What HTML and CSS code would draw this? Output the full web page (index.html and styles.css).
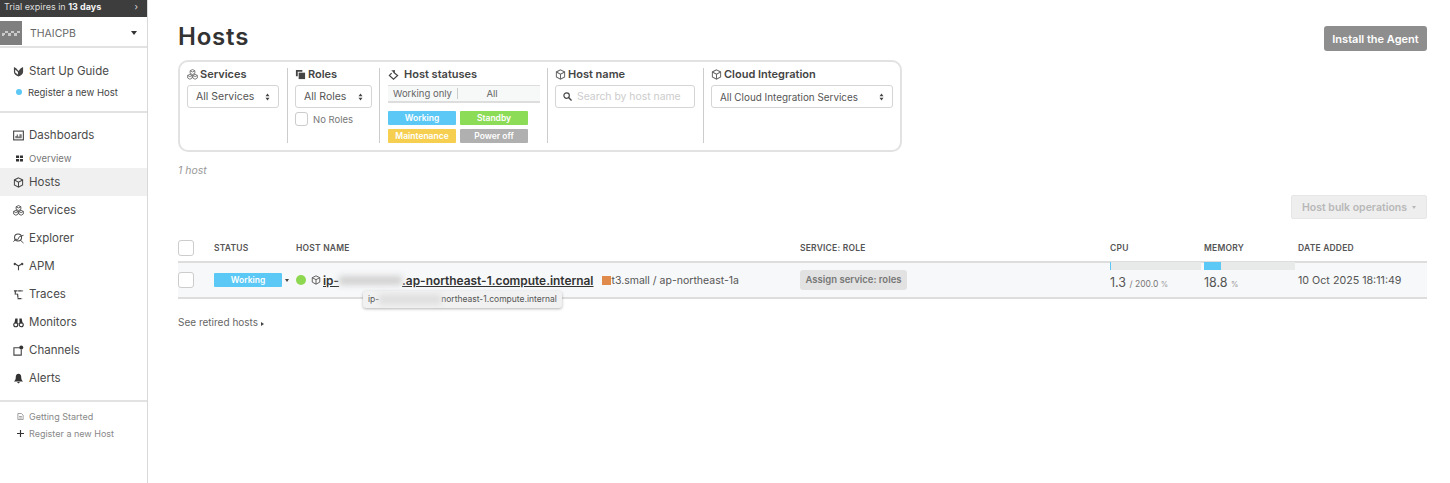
FILE: index.html
```html
<!DOCTYPE html>
<html lang="en">
<head>
    <meta charset="UTF-8">
    <meta name="viewport" content="width=device-width, initial-scale=1.0">
    <title>Hosts</title>
    <link rel="stylesheet" href="styles.css">
</head>
<body>
    <!-- Shared icons -->
    <svg class="icon-defs" aria-hidden="true">
        <symbol id="i-cube" viewBox="0 0 12 12">
            <path d="M6 1 10.5 3.2V8.6L6 11 1.500 8.600V3.200Z M1.500 3.200 6 5.600 10.500 3.200 M6 5.600V11" fill="none" stroke="currentColor" stroke-width="1.100"/>
        </symbol>
        <symbol id="i-services" viewBox="0 0 12 12">
            <path d="M6 .6 8.600 1.900V4.700L6 6 3.400 4.700V1.900Z M3.200 5.800 5.700 7V9.800L3.200 11.200 .7 9.800V7Z M8.800 5.800 11.300 7V9.800L8.800 11.200 6.300 9.800V7Z M3.400 1.900 6 3.200 8.600 1.900M.7 7 3.200 8.300 5.700 7M6.300 7 8.800 8.300 11.300 7" fill="none" stroke="currentColor" stroke-width=".9"/>
        </symbol>
        <symbol id="i-updown" viewBox="0 0 6 10">
            <path d="M3 .5 5.500 4H.5Z M3 9.500 .5 6H5.500Z" fill="currentColor"/>
        </symbol>
    </svg>

    <div class="layout">
        <!-- Sidebar -->
        <nav class="sidebar">
            <div class="trial"><span>Trial expires in <b>13 days</b></span><span class="trial-arrow">›</span></div>
            <div class="org">
                <span class="org-logo">
                    <svg width="22" height="24" viewBox="0 0 22 24"><path d="M2 12h3v2H2zM5 10h3v2H5zM8 12h3v2H8zM11 10h3v2h-3zM14 12h3v2h-3zM17 10h3v2h-3zM2 14h2v1H2zM8 14h3v1H8zM14 14h3v1h-3z" fill="#c9c9c9"/></svg>
                </span>
                <span class="org-name">THAICPB</span>
                <span class="org-caret"></span>
            </div>

            <div class="nav-section guide">
                <div class="nav-item">
                    <svg class="nav-icon" viewBox="0 0 12 12"><path d="M1 1 3.500 2.500 6 5.500 8.500 2.500 11 1V6.500C11 9 8.500 10.500 6 11.500 3.500 10.500 1 9 1 6.500Z" fill="#444"/><path d="M2.400 3.800V7.200L5.400 9.500V6.500Z" fill="#fff"/></svg>
                    Start Up Guide
                </div>
                <div class="nav-sub guide-sub"><span class="blue-dot"></span>Register a new Host</div>
            </div>

            <div class="nav-section">
                <div class="nav-item">
                    <svg class="nav-icon" viewBox="0 0 12 12"><rect x=".7" y="1.200" width="10.600" height="9.600" fill="none" stroke="#444" stroke-width="1.200"/><path d="M2.500 9V6.500H4V5H5.500V7H7V4.500H9.500V9Z" fill="#777"/></svg>
                    Dashboards
                </div>
                <div class="nav-sub">
                    <svg class="sub-icon" viewBox="0 0 8 8"><path d="M0 .5h3.500v3H0zM4.500 .5H8v3H4.500zM0 4.500h3.500v3H0zM4.500 4.500H8v3H4.500z" fill="#333"/></svg>
                    Overview
                </div>
                <div class="nav-item active"><svg class="nav-icon"><use href="#i-cube"/></svg>Hosts</div>
                <div class="nav-item"><svg class="nav-icon"><use href="#i-services"/></svg>Services</div>
                <div class="nav-item">
                    <svg class="nav-icon" viewBox="0 0 12 12"><circle cx="5.500" cy="5" r="3.800" fill="none" stroke="#444" stroke-width="1.100"/><path d="M8 7.800 11.500 11M.5 9.500 3 6.500 5 7.500 7 4 11.500 2.500" fill="none" stroke="#444" stroke-width="1"/></svg>
                    Explorer
                </div>
                <div class="nav-item">
                    <svg class="nav-icon" viewBox="0 0 12 12"><path d="M6 10V5.500M6 5.500 3 3.500M6 5.500 9 3.500" fill="none" stroke="#444" stroke-width="1.200"/><circle cx="2" cy="3.200" r="1.300" fill="#444"/><circle cx="10" cy="3.200" r="1.300" fill="#444"/></svg>
                    APM
                </div>
                <div class="nav-item">
                    <svg class="nav-icon" viewBox="0 0 12 12"><path d="M1 2H11M2.500 2V5.500H5M5 5.500 5.500 10.500H10" fill="none" stroke="#444" stroke-width="1.300" stroke-dasharray="4 .6"/></svg>
                    Traces
                </div>
                <div class="nav-item">
                    <svg class="nav-icon" viewBox="0 0 12 12"><circle cx="3" cy="8.500" r="2.200" fill="none" stroke="#333" stroke-width="1.200"/><circle cx="9" cy="8.500" r="2.200" fill="none" stroke="#333" stroke-width="1.200"/><path d="M1.500 7 2.500 1.500H5V7.500H7V1.500H9.500L10.500 7Z" fill="#333"/></svg>
                    Monitors
                </div>
                <div class="nav-item">
                    <svg class="nav-icon" viewBox="0 0 12 12"><path d="M7 3H1V11H9V5" fill="none" stroke="#444" stroke-width="1.200"/><circle cx="9" cy="2.700" r="2.200" fill="#333"/></svg>
                    Channels
                </div>
                <div class="nav-item">
                    <svg class="nav-icon" viewBox="0 0 12 12"><path d="M6 .8C4 .8 3 2.500 3 4.500 3 6.800 2.300 7.800 1 9.200H11C9.700 7.800 9 6.800 9 4.500 9 2.500 8 .8 6 .8ZM4.700 9.800H7.300C7.200 10.700 6.700 11.300 6 11.300S4.800 10.700 4.700 9.800Z" fill="#333"/></svg>
                    Alerts
                </div>
            </div>

            <div class="nav-foot">
                <div class="foot-item">
                    <svg class="sub-icon" viewBox="0 0 8 8"><path d="M1 .5H5L7 2.500V7.500H1Z M2.500 4H5.500M2.500 5.700H5.500" fill="none" stroke="#777" stroke-width=".8"/></svg>
                    Getting Started
                </div>
                <div class="foot-item">
                    <svg class="sub-icon" viewBox="0 0 8 8"><path d="M4 0V8M0 4H8" stroke="#333" stroke-width="1.300"/></svg>
                    Register a new Host
                </div>
            </div>
        </nav>

        <!-- Main content -->
        <main class="main">
            <header class="page-head">
                <h1>Hosts</h1>
                <button class="btn-agent">Install the Agent</button>
            </header>

            <!-- Filters -->
            <section class="filters">
                <div class="filter filter-services">
                    <div class="filter-title"><svg class="title-icon"><use href="#i-services"/></svg>Services</div>
                    <div class="select">All Services<svg class="updown"><use href="#i-updown"/></svg></div>
                </div>
                <div class="filter filter-roles">
                    <div class="filter-title">
                        <svg class="title-icon" viewBox="0 0 12 12"><path d="M1 1H8V3H3V8H1Z" fill="#444"/><rect x="4" y="4" width="7" height="7" fill="#444"/></svg>
                        Roles
                    </div>
                    <div class="select">All Roles<svg class="updown"><use href="#i-updown"/></svg></div>
                    <label class="no-roles"><span class="checkbox small"></span>No Roles</label>
                </div>
                <div class="filter filter-status">
                    <div class="filter-title">
                        <svg class="title-icon status-icon" viewBox="0 0 12 12"><path d="M6 3.500 10.500 7 6 11 1.500 7 4 4.500" fill="none" stroke="#444" stroke-width="1.300"/><path d="M3.500 1.500 7.500 1V4.500Z" fill="#444"/></svg>
                        Host statuses
                    </div>
                    <div class="status-tabs">
                        <span class="tab tab-working">Working only</span>
                        <span class="tab tab-all">All</span>
                    </div>
                    <div class="status-grid">
                        <span class="status-label working">Working</span>
                        <span class="status-label standby">Standby</span>
                        <span class="status-label maintenance">Maintenance</span>
                        <span class="status-label poweroff">Power off</span>
                    </div>
                </div>
                <div class="filter filter-name">
                    <div class="filter-title"><svg class="title-icon"><use href="#i-cube"/></svg>Host name</div>
                    <div class="search">
                        <svg class="search-icon" viewBox="0 0 10 10"><circle cx="4" cy="4" r="3" fill="none" stroke="#444" stroke-width="1.300"/><path d="M6.200 6.200 9.500 9.500" stroke="#444" stroke-width="1.500"/></svg>
                        Search by host name
                    </div>
                </div>
                <div class="filter filter-cloud">
                    <div class="filter-title"><svg class="title-icon"><use href="#i-cube"/></svg>Cloud Integration</div>
                    <div class="select select-cloud">All Cloud Integration Services<svg class="updown"><use href="#i-updown"/></svg></div>
                </div>
            </section>

            <p class="host-count">1 host</p>

            <div class="bulk-row">
                <button class="btn-bulk">Host bulk operations<span class="bulk-caret"></span></button>
            </div>

            <!-- Hosts table -->
            <div class="table-head grid-row">
                <span class="checkbox"></span>
                <span>STATUS</span>
                <span>HOST NAME</span>
                <span>SERVICE: ROLE</span>
                <span>CPU</span>
                <span>MEMORY</span>
                <span>DATE ADDED</span>
            </div>
            <div class="table-row grid-row">
                <span class="checkbox"></span>
                <span class="status-cell"><span class="badge">Working</span><span class="badge-caret"></span></span>
                <span class="name-cell">
                    <span class="green-dot"></span>
                    <svg class="host-icon"><use href="#i-cube"/></svg>
                    <a class="host-link">ip-<span class="masked"></span>.ap-northeast-1.compute.internal</a>
                    <span class="aws-icon"></span>
                    <span class="host-meta">t3.small / ap-northeast-1a</span>
                    <!-- Tooltip -->
                    <span class="tooltip">ip-<span class="masked masked-tip"></span>northeast-1.compute.internal</span>
                </span>
                <span><span class="btn-assign">Assign service: roles</span></span>
                <span class="metric">
                    <span class="bar"><span class="bar-fill" style="width: 1%"></span></span>
                    <span class="metric-text">1.3 <small>/ 200.0 <i>%</i></small></span>
                </span>
                <span class="metric">
                    <span class="bar"><span class="bar-fill" style="width: 18.8%"></span></span>
                    <span class="metric-text">18.8 <small><i>%</i></small></span>
                </span>
                <span class="date-cell">10 Oct 2025 18:11:49</span>
            </div>

            <p class="retired">See retired hosts<span class="retired-caret"></span></p>
        </main>
    </div>
</body>
</html>
```

FILE: styles.css
```css
* {
    box-sizing: border-box;
}

body {
    margin: 0;
    background-color: #fff;
    color: #444;
    font-family: 'Inter', 'Liberation Sans', sans-serif;
    font-size: 11px;
}

.icon-defs {
    display: none;
}

.layout {
    display: flex;
    min-height: 483px;
}

/* Sidebar */
.sidebar {
    flex: 0 0 148px;
    border-right: 1px solid #d9d9d9;
}

.trial {
    display: flex;
    justify-content: space-between;
    align-items: center;
    height: 17px;
    padding: 0 9px 5px 4px;
    background-color: #3d3d3d;
    color: #ddd;
    font-size: 9px;
}

.trial b {
    color: #f2f2f2;
}

.org {
    display: flex;
    align-items: center;
    height: 31px;
    padding-top: 3px;
    border-bottom: 2px solid #e2e2e2;
}

.org-logo {
    width: 22px;
    height: 24px;
    background-color: #7f7f7f;
}

.org-name {
    flex: 1;
    margin-left: 8px;
    color: #666;
    font-size: 10.500px;
}

.org-caret {
    margin-right: 10px;
    border-left: 3px solid transparent;
    border-right: 3px solid transparent;
    border-top: 4px solid #333;
}

.nav-section {
    padding: 8px 0;
    border-bottom: 2px solid #e2e2e2;
}

.nav-section.guide {
    height: 65px;
    padding: 9px 0 0;
}

.nav-item {
    display: flex;
    align-items: center;
    gap: 5px;
    height: 28px;
    padding-left: 13px;
    color: #4a4a4a;
    font-size: 11.500px;
}

.nav-item.active {
    background-color: #f0f0f0;
}

.nav-icon {
    flex: none;
    width: 11px;
    height: 11px;
    color: #444;
}

.nav-sub {
    display: flex;
    align-items: center;
    gap: 6px;
    height: 19px;
    padding-left: 16px;
    color: #777;
    font-size: 9.500px;
}

.guide-sub {
    color: #444;
    height: 20px;
    margin-top: -3px;
}

.sub-icon {
    flex: none;
    width: 7px;
    height: 7px;
}

.blue-dot {
    width: 6px;
    height: 6px;
    border-radius: 50%;
    background-color: #5cc8f5;
}

.nav-foot {
    padding-top: 6px;
}

.foot-item {
    display: flex;
    align-items: center;
    gap: 5px;
    height: 17px;
    padding-left: 17px;
    color: #888;
    font-size: 9px;
}

/* Main */
.main {
    flex: 1;
    padding: 0 23px 0 30px;
}

.page-head {
    display: flex;
    justify-content: space-between;
    align-items: flex-start;
    height: 60px;
    padding-top: 22px;
}

h1 {
    margin: 0;
    color: #333;
    font-size: 24px;
    font-weight: 600;
    line-height: 30px;
    letter-spacing: .8px;
}

.btn-agent {
    width: 103px;
    height: 25px;
    margin-top: 4px;
    border: none;
    border-radius: 3px;
    background-color: #8e8e8e;
    color: #fff;
    font-family: inherit;
    font-size: 11px;
    font-weight: 600;
}

/* Filters */
.filters {
    display: flex;
    width: 724px;
    height: 92px;
    padding: 6px 0 7px;
    border: 2px solid #e2e2e2;
    border-radius: 10px;
}

.filter {
    padding: 0 7px;
    border-right: 1px solid #ccc;
}

.filter:last-child {
    border-right: none;
}

.filter-services {
    width: 108px;
    padding-right: 8px;
}

.filter-roles {
    width: 92px;
}

.filter-status {
    width: 168px;
    padding-left: 8px;
    padding-right: 0;
}

.filter-name {
    width: 156px;
    padding-right: 8px;
}

.filter-cloud {
    flex: 1;
    padding-right: 7px;
}

.filter-title {
    display: flex;
    align-items: center;
    gap: 2px;
    height: 12px;
    margin-bottom: 5px;
    color: #444;
    font-size: 11px;
    font-weight: 600;
}

.title-icon {
    flex: none;
    width: 11px;
    height: 11px;
    color: #666;
}

.status-icon {
    margin-right: 3px;
}

.select {
    display: flex;
    justify-content: space-between;
    align-items: center;
    height: 23px;
    padding: 0 8px;
    border: 1px solid #d5d5d5;
    border-radius: 3px;
    color: #555;
    font-size: 10.500px;
}

.select-cloud {
    font-size: 9.900px;
}

.updown {
    width: 5px;
    height: 8px;
    color: #444;
}

.no-roles {
    display: flex;
    align-items: center;
    gap: 5px;
    margin-top: 4px;
    color: #777;
    font-size: 9.500px;
}

.checkbox {
    display: block;
    width: 16px;
    height: 16px;
    border: 1px solid #ccc;
    border-radius: 3px;
    background-color: #fff;
}

.checkbox.small {
    width: 13px;
    height: 14px;
}

.status-tabs {
    display: flex;
    align-items: center;
    width: 152px;
    height: 18px;
    border-top: 1px solid #ddd;
    border-bottom: 2px solid #ddd;
    background-color: #f7f8f8;
    color: #666;
    font-size: 9.500px;
}

.tab {
    text-align: center;
}

.tab-working {
    width: 70px;
    border-right: 1px solid #ccc;
}

.tab-all {
    width: 68px;
}

.status-grid {
    display: grid;
    grid-template-columns: 68px 68px;
    column-gap: 4px;
    row-gap: 4px;
    margin-top: 8px;
}

.status-label {
    height: 14px;
    border-radius: 1px;
    color: #fff;
    font-size: 8.500px;
    font-weight: 600;
    line-height: 14px;
    text-align: center;
}

.working {
    background-color: #5cc8f5;
}

.standby {
    background-color: #8ddc58;
}

.maintenance {
    background-color: #f6cf50;
}

.poweroff {
    background-color: #b0b0b0;
}

.search {
    display: flex;
    align-items: center;
    gap: 5px;
    height: 23px;
    padding-left: 7px;
    border: 1px solid #d5d5d5;
    border-radius: 3px;
    color: #ccc;
    font-size: 10.400px;
}

.search-icon {
    width: 9px;
    height: 9px;
}

.host-count {
    margin: 12px 0 0;
    color: #999;
    font-size: 10.500px;
    font-style: italic;
    line-height: 13px;
}

.bulk-row {
    display: flex;
    justify-content: flex-end;
    margin-top: 18px;
}

.btn-bulk {
    display: flex;
    justify-content: center;
    align-items: center;
    gap: 5px;
    width: 136px;
    height: 24px;
    border: 1px solid #e6e6e6;
    border-radius: 2px;
    background-color: #eee;
    color: #b8b8b8;
    font-family: inherit;
    font-size: 10.500px;
    font-weight: 600;
}

.bulk-caret {
    border-left: 2.500px solid transparent;
    border-right: 2.500px solid transparent;
    border-top: 3px solid #b8b8b8;
}

/* Hosts table */
.grid-row {
    display: grid;
    grid-template-columns: 36px 82px 504px 310px 94px 94px 1fr;
}

.table-head {
    align-items: center;
    height: 44px;
    padding-top: 15px;
    border-bottom: 2px solid #ddd;
    color: #555;
    font-size: 8.500px;
    font-weight: 600;
    letter-spacing: .2px;
}

.table-row {
    align-items: center;
    height: 36px;
    border-bottom: 2px solid #ddd;
    background-color: #f7f8f9;
}

.status-cell {
    display: flex;
    align-items: center;
    gap: 3px;
}

.badge {
    width: 68px;
    height: 14px;
    border-radius: 1px;
    background-color: #5cc8f5;
    color: #fff;
    font-size: 8.500px;
    font-weight: 600;
    line-height: 14px;
    text-align: center;
}

.badge-caret,
.retired-caret {
    display: inline-block;
    border-left: 2px solid transparent;
    border-right: 2px solid transparent;
    border-top: 3px solid #444;
}

.name-cell {
    position: relative;
    display: flex;
    align-items: center;
}

.green-dot {
    width: 10px;
    height: 10px;
    border-radius: 50%;
    background-color: #8ed750;
}

.host-icon {
    width: 10px;
    height: 10px;
    margin: 0 2px 0 5px;
    color: #555;
}

.host-link {
    color: #333;
    font-size: 11.900px;
    font-weight: 600;
    text-decoration: underline;
}

.masked {
    display: inline-block;
    width: 63px;
    height: 9px;
    background-color: #d0d0d0;
    filter: blur(3px);
}

.aws-icon {
    width: 9px;
    height: 9px;
    margin-left: 9px;
    background-color: #e08a4c;
}

.host-meta {
    color: #555;
    font-size: 10.500px;
}

.tooltip {
    position: absolute;
    top: 18px;
    left: 67px;
    display: flex;
    align-items: center;
    height: 17px;
    padding: 0 5px;
    border-radius: 3px;
    background-color: #f1f1f1;
    box-shadow: 0 1px 3px rgba(0, 0, 0, .3);
    color: #555;
    font-size: 8.500px;
    white-space: nowrap;
}

.masked-tip {
    width: 62px;
    background-color: #ddd;
}

.btn-assign {
    display: inline-block;
    width: 107px;
    height: 20px;
    border-radius: 3px;
    background-color: #e2e2e2;
    color: #777;
    font-size: 9.500px;
    font-weight: 600;
    line-height: 20px;
    text-align: center;
}

.metric {
    display: flex;
    flex-direction: column;
    align-self: stretch;
    margin-top: -1px;
}

.bar {
    display: block;
    width: 91px;
    height: 8px;
    background-color: #e8eaea;
}

.bar-fill {
    display: block;
    height: 100%;
    background-color: #5cc8f5;
}

.metric-text {
    margin-top: 5px;
    color: #555;
    font-size: 12.500px;
}

.metric-text small {
    color: #777;
    font-size: 8.500px;
}

.metric-text i {
    color: #999;
    font-size: 7.500px;
    font-style: normal;
}

.date-cell {
    color: #555;
    font-size: 10.700px;
}

.retired {
    margin: 17px 0 0;
    color: #666;
    font-size: 10px;
    line-height: 13px;
}

.retired-caret {
    margin-left: 3px;
    border-top: 2px solid transparent;
    border-bottom: 2px solid transparent;
    border-right: none;
    border-left: 3px solid #444;
}
```
